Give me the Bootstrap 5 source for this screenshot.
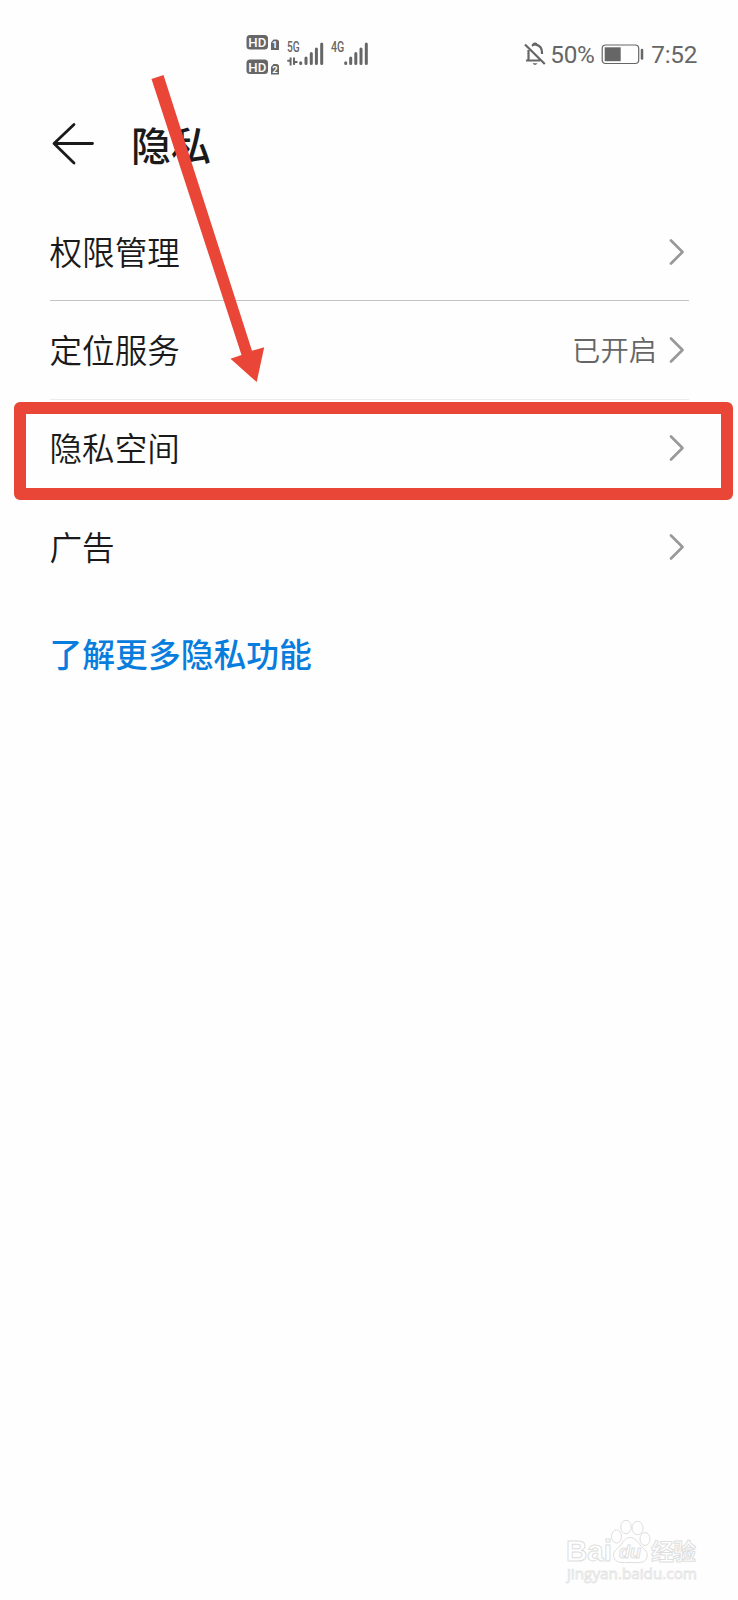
<!DOCTYPE html>
<html lang="zh-CN">
<head>
<meta charset="utf-8">
<meta name="viewport" content="width=device-width, initial-scale=1">
<title>隐私</title>
<link href="https://cdn.jsdelivr.net/npm/bootstrap@5.3.0/dist/css/bootstrap.min.css" rel="stylesheet">
<style>
body{background:#fefefe;color:#1a1a1a;font-family:Roboto,"Noto Sans CJK SC",sans-serif}
.screen{height:1600px}
.status{height:98px;padding:30px 41px 0 243px;color:#666}
.status-text{font:400 24.3px/28px Roboto,sans-serif;padding-top:11px;letter-spacing:-.3px}
.title-bar{height:105px;padding:0 0 14px 51px}
.title-bar h1{font-size:40px;line-height:60px;font-weight:500;margin-left:36px;padding-top:9px}
.settings{padding:0 49px 0 49.5px}
.setting{height:98.4px;font-size:32.6px;line-height:48px;font-weight:350;border-bottom:1px solid #c4c4c4;color:#1a1a1a}
.setting:nth-child(2){border-color:#ececec}
.setting:nth-child(n+3){border-color:transparent}
.setting-name{padding-top:4px}
.state{font-size:28.3px;color:#666;margin-right:12px;padding-top:4px}
.more{font-size:32.8px;line-height:48px;font-weight:500;color:#087ddd;margin:35px 0 0 49.5px}
.target{left:13.5px;top:402px;width:719px;height:97.5px;border:12px solid #e94638;border-radius:6px;pointer-events:none}
.pointer{left:0;top:0;pointer-events:none}
.watermark{right:30px;bottom:8px}
</style>
</head>
<body>
<main class="screen position-relative overflow-hidden">
  <header class="status d-flex justify-content-between align-items-start">
    <svg width="132" height="50" viewBox="243 30 132 50" fill="#666" font-family="Roboto,sans-serif">
      <rect x="246.500" y="35" width="21.500" height="14.500" rx="3.500"/>
      <rect x="246.500" y="59.500" width="21.500" height="14.500" rx="3.500"/>
      <path d="M273.500 39.500h3q2.500 0 2.500 2.500v8H271v-7.500z"/>
      <path d="M273.500 64h3q2.500 0 2.500 2.500v8H271V67z"/>
      <g fill="#fff" font-weight="500" text-anchor="middle">
        <text x="257.300" y="47" font-size="13.500" textLength="18" lengthAdjust="spacingAndGlyphs">HD</text>
        <text x="257.300" y="71.500" font-size="13.500" textLength="18" lengthAdjust="spacingAndGlyphs">HD</text>
        <text x="274.800" y="48.400" font-size="9.500" font-weight="700">1</text>
        <text x="275" y="73" font-size="9.500" font-weight="700">2</text>
      </g>
      <g font-size="14" font-weight="500">
        <text x="287" y="52.300" textLength="12.700" lengthAdjust="spacingAndGlyphs">5G</text>
        <text x="331" y="52.300" textLength="13.300" lengthAdjust="spacingAndGlyphs">4G</text>
      </g>
      <g fill="none" stroke="#666" stroke-width="3" stroke-linecap="round">
        <path d="M300.700 62.800v.7M306 58v5.500M311.300 53.500v10M316.400 49v14.500M321.700 44v19.500"/>
        <path d="M345.700 62.800v.7M350.700 58v5.500M355.800 53.500v10M361 49v14.500M366.300 44v19.500"/>
      </g>
      <path d="M287.300 60.800h3.300V57.500 65.500M294 57.500v7.300l.3-2.800h3.200" fill="none" stroke="#666" stroke-width="2"/>
    </svg>
    <div class="d-flex">
      <svg width="29" height="50" viewBox="520 30 29 50" fill="none" stroke="#666" stroke-width="2.200">
        <path d="M527.500 60V51.500l-.1-1.500M531 45.800q1.300-.9 1.900-1.200 1.100-1.700 2.200 0 5.900 1.400 5.900 8v1.400M525 60.500h14M524 44.500 543.800 64"/>
        <path d="M532.500 44.500c0-1.300 3-1.300 3 0z" fill="#666"/>
        <path d="M531.500 63.300h5q-2.500 3.500-5 0" fill="#666" stroke="none"/>
      </svg>
      <span class="status-text" style="width:51px">50%</span>
      <svg width="50" height="50" viewBox="600 30 50 50" fill="none" stroke="#666">
        <rect x="601.200" y="45" width="36.500" height="18.500" rx="3.500" stroke-width="1.200"/>
        <path d="M603.700 47.300h16v13.900h-16z" fill="#666" stroke="none"/>
        <path d="M641 50v8.500" stroke-width="2.500" stroke-linecap="round"/>
      </svg>
      <span class="status-text">7:52</span>
    </div>
  </header>

  <div class="title-bar d-flex align-items-center">
    <svg width="44" height="44" viewBox="51 121 44 44" fill="none" stroke="#1a1a1a" stroke-width="2.800" stroke-linecap="round" stroke-linejoin="round"><path d="M74 123.500 54 142.500l20 19.500M54.500 142.500H92.500"/></svg>
    <h1 class="mb-0">隐私</h1>
  </div>

  <div class="settings">
    <a class="setting d-flex align-items-center justify-content-between text-decoration-none" href="#"><span class="setting-name">权限管理</span>
      <svg width="20" height="30" viewBox="0 0 20 30" fill="none" stroke="#999" stroke-width="2.700" stroke-linecap="round" stroke-linejoin="round"><path d="M2 3.500 13.500 15 2 26.500"/></svg></a>
    <a class="setting d-flex align-items-center justify-content-between text-decoration-none" href="#"><span class="setting-name">定位服务</span>
      <span class="d-flex align-items-center"><span class="state">已开启</span><svg width="20" height="30" viewBox="0 0 20 30" fill="none" stroke="#999" stroke-width="2.700" stroke-linecap="round" stroke-linejoin="round"><path d="M2 3.500 13.500 15 2 26.500"/></svg></span></a>
    <a class="setting d-flex align-items-center justify-content-between text-decoration-none" href="#"><span class="setting-name">隐私空间</span>
      <svg width="20" height="30" viewBox="0 0 20 30" fill="none" stroke="#999" stroke-width="2.700" stroke-linecap="round" stroke-linejoin="round"><path d="M2 3.500 13.500 15 2 26.500"/></svg></a>
    <a class="setting d-flex align-items-center justify-content-between text-decoration-none" href="#"><span class="setting-name">广告</span>
      <svg width="20" height="30" viewBox="0 0 20 30" fill="none" stroke="#999" stroke-width="2.700" stroke-linecap="round" stroke-linejoin="round"><path d="M2 3.500 13.500 15 2 26.500"/></svg></a>
  </div>
  <a class="more d-inline-block text-decoration-none" href="#">了解更多隐私功能</a>

  <div class="target position-absolute"></div>
  <svg class="pointer position-absolute" width="290" height="400" viewBox="0 0 290 400"><path d="M151.500 79 163.500 75 252 350.800 264.200 347.200 256.700 382 230.500 358.700 241.500 355z" fill="#e94638"/></svg>

  <svg class="watermark position-absolute" width="148" height="76" viewBox="560 1516 148 76" fill="#fff" stroke="#dedede" stroke-width="1">
    <text x="566" y="1561" font-family="Liberation Sans,sans-serif" font-weight="700" font-size="30" textLength="46" lengthAdjust="spacingAndGlyphs">Bai</text>
    <ellipse cx="616.500" cy="1536.500" rx="5" ry="6.500"/>
    <ellipse cx="626" cy="1527" rx="5.200" ry="6.700"/>
    <ellipse cx="637.500" cy="1528" rx="5.500" ry="6.700"/>
    <ellipse cx="645" cy="1539" rx="5" ry="6.500"/>
    <path d="M630 1537.500c5 0 8 5 11 8.500 4 4 7 6 6 11-2 7-9 5.500-17 5.500s-14 1-16-5c-2-6 3-8 6-11.500 3-4 5-8.500 10-8.500z"/>
    <text x="619" y="1558" font-family="Liberation Sans,sans-serif" font-style="italic" font-weight="700" font-size="18" textLength="22" lengthAdjust="spacingAndGlyphs">du</text>
    <text x="651" y="1560" font-family="Noto Sans CJK SC,sans-serif" font-weight="700" font-size="23" textLength="45">经验</text>
    <text x="567" y="1579" font-family="Open Sans,sans-serif" font-size="15" textLength="130" lengthAdjust="spacingAndGlyphs" stroke="#e4e4e4" stroke-width=".8">jingyan.baidu.com</text>
  </svg>
</main>
<script src="https://cdn.jsdelivr.net/npm/bootstrap@5.3.0/dist/js/bootstrap.bundle.min.js"></script>
</body>
</html>
